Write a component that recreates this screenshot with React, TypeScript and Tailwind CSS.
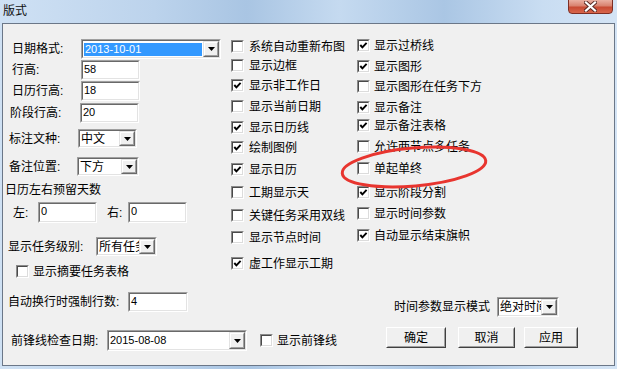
import React from "react";

const FONT = "font-[family-name:'Liberation_Sans','Noto_Sans_CJK_SC',sans-serif]";

const CENTER_ITEMS = [
  { label: "系统自动重新布图", checked: false, cls: "mt-0" },
  { label: "显示边框", checked: false, cls: "mt-[6px]" },
  { label: "显示非工作日", checked: true, cls: "mt-[7px]" },
  { label: "显示当前日期", checked: false, cls: "mt-[8px]" },
  { label: "显示日历线", checked: true, cls: "mt-[8px]" },
  { label: "绘制图例", checked: true, cls: "mt-[7px]" },
  { label: "显示日历", checked: true, cls: "mt-[9px]" },
  { label: "工期显示天", checked: false, cls: "mt-[10px]" },
  { label: "关键任务采用双线", checked: false, cls: "mt-[10px]" },
  { label: "显示节点时间", checked: false, cls: "mt-[9px]" },
  { label: "虚工作显示工期", checked: true, cls: "mt-[13px]" },
];

const RIGHT_ITEMS = [
  { label: "显示过桥线", checked: true, cls: "mt-0" },
  { label: "显示图形", checked: true, cls: "mt-[8px]" },
  { label: "显示图形在任务下方", checked: false, cls: "mt-[7px]" },
  { label: "显示备注", checked: true, cls: "mt-[8px]" },
  { label: "显示备注表格", checked: true, cls: "mt-[5px]" },
  { label: "允许两节点多任务", checked: false, cls: "mt-[8px]" },
  { label: "单起单终", checked: false, cls: "mt-[9px]" },
  { label: "显示阶段分割", checked: true, cls: "mt-[11px]" },
  { label: "显示时间参数", checked: false, cls: "mt-[8px]" },
  { label: "自动显示结束旗帜", checked: true, cls: "mt-[9px]" },
];

function Check({ checked }: { checked: boolean }) {
  return (
    <span className="w-[13px] h-[13px] shrink-0 border border-t-[#8a8a8a] border-l-[#8a8a8a] border-b-white border-r-white">
      <span className="flex w-full h-full items-center justify-center bg-white border border-t-[#4a4a4a] border-l-[#4a4a4a] border-b-[#dcdcdc] border-r-[#dcdcdc]">
        {checked && (
          <svg width="9" height="9" viewBox="0 0 9 9">
            <polyline points="1.3,4 3.4,6.4 7.6,1.8" fill="none" stroke="#000" strokeWidth="1.9" />
          </svg>
        )}
      </span>
    </span>
  );
}

function CheckRow({ label, checked, cls, gap = "ml-[4px]" }: { label: string; checked: boolean; cls?: string; gap?: string }) {
  return (
    <div className={`flex items-center h-[13px] ${cls ?? ""}`}>
      <Check checked={checked} />
      <span className={`${gap} text-[12px] leading-[14px] whitespace-nowrap text-black`}>{label}</span>
    </div>
  );
}

function Sunken({ cls, children }: { cls: string; children: React.ReactNode }) {
  return (
    <div className={`shrink-0 border border-t-[#a0a0a0] border-l-[#a0a0a0] border-b-white border-r-white ${cls}`}>
      <div className="flex w-full h-full bg-white border border-t-[#696969] border-l-[#696969] border-b-[#e3e3e3] border-r-[#e3e3e3] overflow-hidden">
        {children}
      </div>
    </div>
  );
}

function TextBox({ value, cls }: { value: string; cls: string }) {
  return (
    <Sunken cls={cls}>
      <span className="pl-[1px] pt-[1px] text-[11px] leading-[13px] text-black">{value}</span>
    </Sunken>
  );
}

function DropBtn() {
  return (
    <div className="w-[16px] h-full shrink-0 border border-t-[#e3e3e3] border-l-[#e3e3e3] border-b-[#696969] border-r-[#696969]">
      <div className="flex w-full h-full items-center justify-center bg-[#f0f0f0] border border-t-white border-l-white border-b-[#a0a0a0] border-r-[#a0a0a0]">
        <svg width="7" height="4" viewBox="0 0 7 4">
          <polygon points="0,0 7,0 3.5,4" fill="#000" />
        </svg>
      </div>
    </div>
  );
}

function Combo({ value, cls, selected = false, cjk = false }: { value: string; cls: string; selected?: boolean; cjk?: boolean }) {
  return (
    <Sunken cls={cls}>
      <div className="flex-1 min-w-0 flex items-center overflow-hidden">
        {selected ? (
          <span className="flex-1 mx-[1px] h-[13px] flex items-center bg-[#3399ff] text-white text-[11px] pl-[1px] whitespace-nowrap">{value}</span>
        ) : (
          <span className={`pl-[1px] whitespace-nowrap text-black ${cjk ? "text-[12px]" : "text-[11px]"}`}>{value}</span>
        )}
      </div>
      <DropBtn />
    </Sunken>
  );
}

function Btn({ label, cls }: { label: string; cls: string }) {
  return (
    <div className={`h-[21px] border border-t-white border-l-white border-b-[#404040] border-r-[#404040] ${cls}`}>
      <div className="flex w-full h-full items-center justify-center bg-[#f0f0f0] border border-t-[#f0f0f0] border-l-[#f0f0f0] border-b-[#a0a0a0] border-r-[#a0a0a0] text-[12px] text-black">
        {label}
      </div>
    </div>
  );
}

function Label({ text, cls }: { text: string; cls: string }) {
  return <span className={`shrink-0 text-[12px] leading-[14px] whitespace-nowrap text-black ${cls}`}>{text}</span>;
}

export default function App() {
  return (
    <div className={`relative w-[617px] h-[369px] flex flex-col overflow-hidden bg-[linear-gradient(90deg,#cfe1f4_0%,#bcd3ec_25%,#a9c5e3_40%,#c5daf0_55%,#aac6e4_72%,#c9ddf2_88%,#d4e4f5_100%)] ${FONT}`}>
      {/* title bar */}
      <div className="h-[23px] flex items-start justify-between">
        <span className="ml-[3px] mt-[4px] text-[12px] leading-[14px] text-[#111]">版式</span>
        <div className="mr-[4px] w-[45px] h-[15px] -mt-px rounded-b-[4px] border border-[#7d2e24] bg-[linear-gradient(180deg,#eab0a2_0%,#d9826f_45%,#c84a33_55%,#d8664c_100%)] flex items-center justify-center">
          <svg width="13" height="11" viewBox="0 0 13 11">
            <path d="M2 1.5 L11 9.5 M11 1.5 L2 9.5" stroke="#5a2a24" strokeWidth="4" strokeLinecap="square" />
            <path d="M2 1.5 L11 9.5 M11 1.5 L2 9.5" stroke="#fff" strokeWidth="2.2" strokeLinecap="square" />
          </svg>
        </div>
      </div>

      {/* client area */}
      <div className="ml-[2px] w-[613px] h-[343px] border border-[#6b7788] bg-[#f0f0f0] flex flex-col">
        <div className="flex">
          {/* left column */}
          <div className="w-[228px] pt-[15px] flex flex-col">
            <div className="flex items-center h-[20px] pl-[9px]">
              <Label text="日期格式:" cls="w-[69px]" />
              <Combo value="2013-10-01" cls="w-[140px] h-[20px]" selected />
            </div>
            <div className="flex items-center h-[20px] pl-[9px] mt-[1px]">
              <Label text="行高:" cls="w-[69px]" />
              <TextBox value="58" cls="w-[59px] h-[20px]" />
            </div>
            <div className="flex items-center h-[20px] pl-[9px] mt-[1px]">
              <Label text="日历行高:" cls="w-[69px]" />
              <TextBox value="18" cls="w-[59px] h-[20px]" />
            </div>
            <div className="flex items-center h-[20px] pl-[7px] mt-[2px]">
              <Label text="阶段行高:" cls="w-[70px]" />
              <TextBox value="20" cls="w-[59px] h-[20px]" />
            </div>
            <div className="flex items-center h-[19px] pl-[6px] mt-[6px]">
              <Label text="标注文种:" cls="w-[69px]" />
              <Combo value="中文" cls="w-[59px] h-[19px]" cjk />
            </div>
            <div className="flex items-center h-[19px] pl-[6px] mt-[9px]">
              <Label text="备注位置:" cls="w-[68px]" />
              <Combo value="下方" cls="w-[62px] h-[19px]" cjk />
            </div>
            <div className="flex items-center h-[14px] pl-[2px] mt-[7px]">
              <Label text="日历左右预留天数" cls="" />
            </div>
            <div className="flex items-center h-[21px] pl-[10px] mt-[5px]">
              <Label text="左:" cls="w-[25px]" />
              <TextBox value="0" cls="w-[59px] h-[21px]" />
              <Label text="右:" cls="ml-[10px] w-[21px]" />
              <TextBox value="0" cls="w-[59px] h-[21px]" />
            </div>
            <div className="flex items-center h-[19px] pl-[5px] mt-[14px]">
              <Label text="显示任务级别:" cls="w-[88px]" />
              <Combo value="所有任务" cls="w-[61px] h-[19px]" cjk />
            </div>
            <div className="pl-[13px] mt-[9px]">
              <CheckRow label="显示摘要任务表格" checked={false} />
            </div>
          </div>

          {/* center column */}
          <div className="w-[126px] pt-[16px] flex flex-col">
            {CENTER_ITEMS.map((it) => (
              <CheckRow key={it.label} label={it.label} checked={it.checked} cls={it.cls} gap="ml-[5px]" />
            ))}
          </div>

          {/* right column */}
          <div className="flex-1 pt-[15px] flex flex-col">
            {RIGHT_ITEMS.map((it) => (
              <CheckRow key={it.label} label={it.label} checked={it.checked} cls={it.cls} />
            ))}
          </div>
        </div>

        {/* bottom rows */}
        <div className="flex">
          <div className="w-[383px] flex flex-col">
            <div className="flex items-center h-[20px] pl-[5px] mt-[14px]">
              <Label text="自动换行时强制行数:" cls="w-[120px]" />
              <TextBox value="4" cls="w-[60px] h-[20px]" />
            </div>
            <div className="flex items-center h-[21px] pl-[8px] mt-[18px]">
              <Label text="前锋线检查日期:" cls="w-[96px]" />
              <Combo value="2015-08-08" cls="w-[140px] h-[21px]" />
              <div className="ml-[13px]">
                <CheckRow label="显示前锋线" checked={false} />
              </div>
            </div>
          </div>
          <div className="flex flex-col">
            <div className="flex items-center h-[20px] pl-[8px] mt-[19px]">
              <Label text="时间参数显示模式" cls="w-[103px]" />
              <Combo value="绝对时间" cls="w-[62px] h-[20px]" cjk />
            </div>
            <div className="flex items-center mt-[10px]">
              <Btn label="确定" cls="w-[60px]" />
              <Btn label="取消" cls="ml-[12px] w-[57px]" />
              <Btn label="应用" cls="ml-[9px] w-[54px]" />
            </div>
          </div>
        </div>
      </div>

      {/* red annotation ellipse */}
      <svg className="absolute left-0 top-0 pointer-events-none" width="617" height="369" viewBox="0 0 617 369">
        <ellipse cx="414" cy="167" rx="72" ry="19" fill="none" stroke="#e8352f" strokeWidth="3" transform="rotate(-5 414 167)" />
      </svg>
    </div>
  );
}
